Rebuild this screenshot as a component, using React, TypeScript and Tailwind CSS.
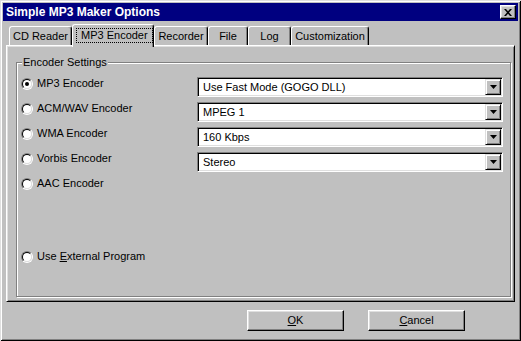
import React from "react";

const raised =
  "border border-t-white border-l-white border-r-black border-b-black shadow-[inset_-1px_-1px_0_#808080,inset_1px_1px_0_#dfdfdf]";

function Radio({ label, checked }: { label: React.ReactNode; checked?: boolean }) {
  return (
    <div className="h-[25px] flex items-center gap-[4px]">
      <div className="w-[12px] h-[12px] rounded-full border border-t-[#808080] border-l-[#808080] border-r-white border-b-white">
        <div className="w-full h-full rounded-full border border-t-black border-l-black border-r-[#dfdfdf] border-b-[#dfdfdf] bg-white flex items-center justify-center">
          {checked && <div className="w-[4px] h-[4px] rounded-full bg-black" />}
        </div>
      </div>
      <span className="text-[11px] leading-[13px] text-black">{label}</span>
    </div>
  );
}

function Combo({ value }: { value: string }) {
  return (
    <div className="h-[20px] w-full flex p-[1px] bg-white border border-t-[#808080] border-l-[#808080] border-r-white border-b-white shadow-[inset_1px_1px_0_#000,inset_-1px_-1px_0_#dfdfdf]">
      <div className="flex-1 flex items-center pl-[4px] text-[11px] leading-[13px] text-black">{value}</div>
      <div className="w-[16px] h-[16px] bg-[#c0c0c0] flex items-center justify-center border border-t-[#dfdfdf] border-l-[#dfdfdf] border-r-black border-b-black shadow-[inset_1px_1px_0_#fff,inset_-1px_-1px_0_#808080]">
        <svg width="7" height="4" viewBox="0 0 7 4">
          <path d="M0 0h7L3.5 4z" fill="#000" />
        </svg>
      </div>
    </div>
  );
}

function Tab({ label, w, selected }: { label: string; w: number; selected?: boolean }) {
  if (selected) {
    return (
      <div
        className="relative z-10 h-[23px] -mb-[2px] bg-[#c0c0c0] border-t border-l border-r border-t-white border-l-white border-r-black rounded-t-[3px] shadow-[inset_-1px_0_0_#808080] pt-[3px] pl-[3px] flex items-start"
        style={{ width: w }}
      >
        <span className="border border-dotted border-black px-[4px] text-[11px] leading-[13px] text-black">{label}</span>
      </div>
    );
  }
  return (
    <div
      className="h-[19px] border-t border-l border-r border-t-white border-l-white border-r-black rounded-t-[3px] shadow-[inset_-1px_0_0_#808080] pt-[3px] flex items-start justify-center text-[11px] leading-[13px] text-black"
      style={{ width: w }}
    >
      {label}
    </div>
  );
}

export default function App() {
  return (
    <div className="w-[521px] h-[341px] bg-[#c0c0c0] p-[3px] font-['Liberation_Sans',Arial,sans-serif] shadow-[inset_1px_1px_0_#dfdfdf,inset_-1px_-1px_0_#000,inset_2px_2px_0_#fff,inset_-2px_-2px_0_#808080]">
      <div className="h-[18px] bg-[#000080] flex items-center justify-between pl-[3px] pr-[2px]">
        <span className="text-white font-bold text-[12px] leading-[14px]">Simple MP3 Maker Options</span>
        <div className="w-[16px] h-[14px] bg-[#c0c0c0] border border-t-white border-l-white border-r-black border-b-black shadow-[inset_-1px_-1px_0_#808080,inset_1px_1px_0_#dfdfdf] flex items-center justify-center">
          <svg width="8" height="7" viewBox="0 0 8 7">
            <path d="M0 0h2l2 2.2L6 0h2L5 3.5 8 7H6L4 4.8 2 7H0l3-3.5z" fill="#000" />
          </svg>
        </div>
      </div>
      <div className="ml-[3px] mt-[3px]">
        <div className="h-[21px] flex items-end pl-[3px]">
          <Tab label="CD Reader" w={63} />
          <Tab label="MP3 Encoder" w={82} selected />
          <Tab label="Recorder" w={54} />
          <Tab label="File" w={40} />
          <Tab label="Log" w={43} />
          <Tab label="Customization" w={78} />
        </div>
        <div className="w-[509px] h-[257px] border border-t-white border-l-white border-r-black border-b-black shadow-[inset_1px_1px_0_#dfdfdf,inset_-1px_-1px_0_#808080]">
          <div className="relative ml-[9px] mt-[16px] w-[495px] h-[235px] border border-[#808080] shadow-[1px_1px_0_#fff,inset_1px_1px_0_#fff] flex">
            <span className="absolute left-[5px] -top-[7px] bg-[#c0c0c0] px-[1px] text-[11px] leading-[13px] text-black">
              Encoder Settings
            </span>
            <div className="w-[180px] pl-[4px] pt-[8px] flex flex-col">
              <Radio label="MP3 Encoder" checked />
              <Radio label="ACM/WAV Encoder" />
              <Radio label="WMA Encoder" />
              <Radio label="Vorbis Encoder" />
              <Radio label="AAC Encoder" />
              <div className="mt-[48px]">
                <Radio
                  label={
                    <>
                      Use <span className="underline">E</span>xternal Program
                    </>
                  }
                />
              </div>
            </div>
            <div className="w-[306px] pt-[14px] flex flex-col gap-[5px]">
              <Combo value="Use Fast Mode (GOGO DLL)" />
              <Combo value="MPEG 1" />
              <Combo value="160 Kbps" />
              <Combo value="Stereo" />
            </div>
          </div>
        </div>
      </div>
      <div className="mt-[8px] ml-[244px] flex gap-[24px]">
        <button className={`w-[97px] h-[21px] bg-[#c0c0c0] flex items-center justify-center text-[11px] leading-[13px] text-black ${raised}`}>
          <span>
            <span className="underline">O</span>K
          </span>
        </button>
        <button className={`w-[97px] h-[21px] bg-[#c0c0c0] flex items-center justify-center text-[11px] leading-[13px] text-black ${raised}`}>
          <span>
            <span className="underline">C</span>ancel
          </span>
        </button>
      </div>
    </div>
  );
}
